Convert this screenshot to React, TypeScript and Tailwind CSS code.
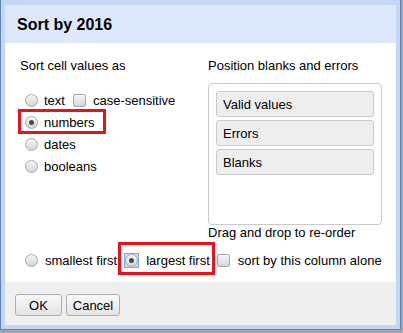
import React from "react";

function Radio({ checked = false }: { checked?: boolean }) {
  return (
    <span className="w-[13px] h-[13px] rounded-full border border-[#a9a9a9] bg-linear-to-b from-[#f7f7f7] to-[#d4d4d4] flex items-center justify-center shrink-0">
      {checked && <span className="w-[5px] h-[5px] rounded-full bg-[#4a4a4a]" />}
    </span>
  );
}

function Checkbox({ className = "" }: { className?: string }) {
  return (
    <span className={"block w-[13px] h-[13px] rounded-[2px] border border-[#a9a9a9] bg-linear-to-b from-[#f7f7f7] to-[#d6d6d6] shrink-0 " + className} />
  );
}

function Item({ label }: { label: string }) {
  return (
    <div className="h-[26px] w-[158px] rounded-[3px] border border-[#cacaca] bg-[#eeeeee] pl-[6px] flex items-center">
      {label}
    </div>
  );
}

export default function App() {
  return (
    <div className="w-[403px] h-[333px] bg-[#a3a3a3] font-['Liberation_Sans',Arial,sans-serif] text-[13px] leading-[15px] text-black">
      <div className="w-[401px] h-[330px] border-x border-b border-[#5f83bd] bg-[#c3d7f4] px-[4px] pt-[5px] pb-[4px] flex flex-col">
        <div className="h-[38px] bg-[#dde8fc] flex items-center pl-[12px] text-[16px] font-bold">
          Sort by 2016
        </div>
        <div className="relative h-[239px] bg-white pl-[15px] pt-[15px] flex flex-col">
          <div className="flex">
            <div className="w-[188px] flex flex-col">
              <div className="h-[15px]">Sort cell values as</div>
              <div className="mt-[16px] pl-[5px] flex flex-col">
                <div className="h-[22px] flex items-center">
                  <Radio />
                  <span className="ml-[6px]">text</span>
                  <Checkbox className="ml-[8px]" />
                  <span className="ml-[7px]">case-sensitive</span>
                </div>
                <div className="h-[22px] flex items-center">
                  <Radio checked />
                  <span className="ml-[6px]">numbers</span>
                </div>
                <div className="h-[22px] flex items-center">
                  <Radio />
                  <span className="ml-[6px]">dates</span>
                </div>
                <div className="h-[22px] flex items-center">
                  <Radio />
                  <span className="ml-[6px]">booleans</span>
                </div>
              </div>
            </div>
            <div className="w-[174px] flex flex-col">
              <div className="h-[15px]">Position blanks and errors</div>
              <div className="mt-[10px] h-[142px] rounded-[4px] border border-[#cacaca] pl-[7px] pt-[7px] flex flex-col gap-[3px]">
                <Item label="Valid values" />
                <Item label="Errors" />
                <Item label="Blanks" />
              </div>
              <div className="h-[15px]">Drag and drop to re-order</div>
            </div>
          </div>
          <div className="mt-[9px] h-[22px] pl-[5px] flex items-center">
            <Radio />
            <span className="ml-[7px]">smallest first</span>
            <span className="ml-[7px] w-[15px] h-[15px] border border-[#7fa8de] bg-[#c6dcf6] flex items-center justify-center">
              <Radio checked />
            </span>
            <span className="ml-[7px]">largest first</span>
            <Checkbox className="ml-[7px]" />
            <span className="ml-[8px]">sort by this column alone</span>
          </div>
          <div className="absolute left-[13px] top-[66px] w-[88px] h-[25px] border-[3px] border-[#e8121f]" />
          <div className="absolute left-[113px] top-[199px] w-[97px] h-[33px] border-[3px] border-[#e8121f]" />
        </div>
        <div className="h-[43px] bg-[#efefef] pl-[10px] pt-[12px] flex gap-[4px] items-start">
          <button className="w-[47px] h-[22px] rounded-[3px] border border-[#adadad] bg-linear-to-b from-[#fafafa] to-[#e3e3e3] flex items-center justify-center">OK</button>
          <button className="w-[54px] h-[22px] rounded-[3px] border border-[#adadad] bg-linear-to-b from-[#fafafa] to-[#e3e3e3] flex items-center justify-center">Cancel</button>
        </div>
      </div>
    </div>
  );
}
